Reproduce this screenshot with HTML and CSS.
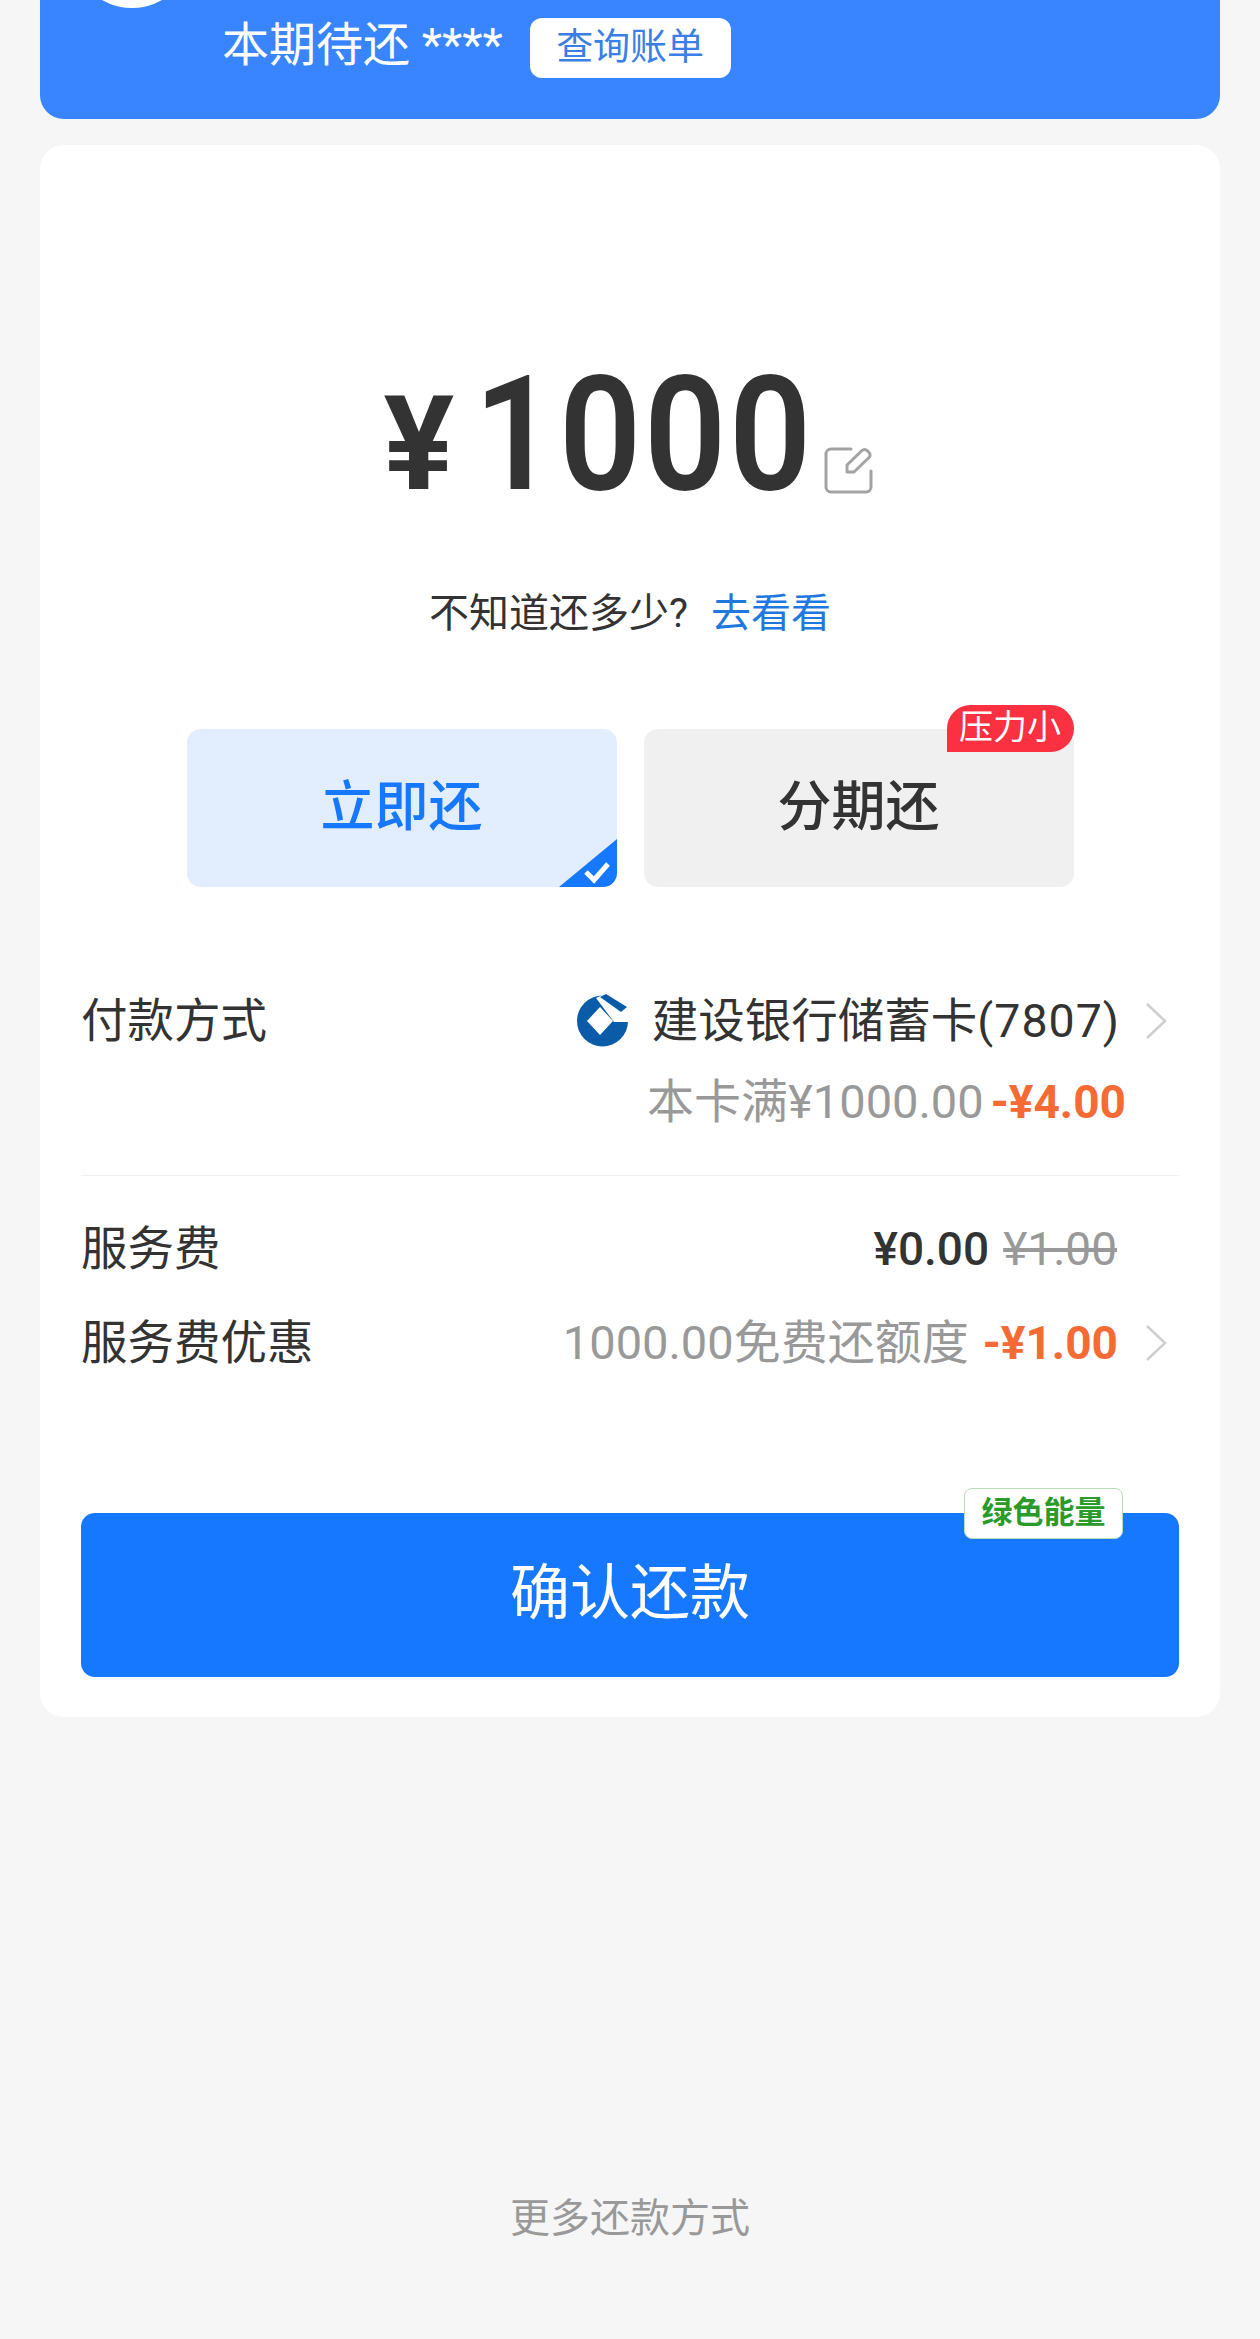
FILE: index.html
```html
<!DOCTYPE html>
<html lang="zh-CN">
<head>
<meta charset="utf-8">
<title>还款</title>
<link rel="stylesheet" href="styles.css">
</head>
<body>
<div class="page">
  <section class="banner">
    <div class="avatar"></div>
    <span class="due">本期待还 ****</span>
    <span class="bill-btn">查询账单</span>
  </section>

  <section class="card">
    <div class="amount">
      <span class="yen">¥</span>
      <span class="digits">1000</span>
      <svg class="edit" viewBox="0 0 49 47" width="49" height="47" fill="none" stroke="#a3a3a3" stroke-width="3" stroke-linecap="round" stroke-linejoin="round">
        <path d="M27 2H7a5 5 0 0 0-5 5v33a5 5 0 0 0 5 5h35a5 5 0 0 0 5-5V24"/>
        <path d="M23 25V18L38 3.500a3.500 3.500 0 0 1 5 0l2 2a3.500 3.500 0 0 1 0 5L30 25Z"/>
      </svg>
    </div>
    <p class="hint">不知道还多少?<a class="hint-link">去看看</a></p>

    <div class="options">
      <div class="option option-on">立即还
        <svg class="corner" viewBox="0 0 58 48" width="58" height="48">
          <path d="M58 0V48H0Z" fill="#1677ff"/>
          <path d="M27 33l8 8 14-16" fill="none" stroke="#fff" stroke-width="5"/>
        </svg>
      </div>
      <div class="option">分期还<span class="badge">压力小</span></div>
    </div>

    <div class="pay">
      <span class="label">付款方式</span>
      <div class="pay-right">
        <div class="pay-line">
          <svg class="bank" viewBox="0 0 51 54" width="51" height="54">
            <circle cx="25.500" cy="27" r="25.500" fill="#0b5ca8"/>
            <path d="M19 4L30 -1L56 14V28H37Z" fill="#fff"/>
            <path d="M23 3L29 0L50 13L44 18Z" fill="#0b5ca8"/>
            <path d="M23 13L36 27L23 41L10 27Z" fill="#fff"/>
          </svg>
          <span class="bank-name">建设银行储蓄卡<span class="bank-no">(7807)</span></span>
          <svg class="chev" viewBox="0 0 22 38" width="22" height="38"><path d="M2 2l18 17L2 36" fill="none" stroke="#cfcfcf" stroke-width="2.500"/></svg>
        </div>
        <div class="pay-sub"><span class="muted sub-amt">本卡满¥1000.00</span><b class="off">-¥4.00</b></div>
      </div>
    </div>

    <div class="fees">
      <div class="fee">
        <span class="label">服务费</span>
        <span class="fee-val fee-val-pad"><b class="free">¥0.00</b><s class="was">¥1.00</s></span>
      </div>
      <div class="fee fee-second">
        <span class="label">服务费优惠</span>
        <span class="fee-val"><span class="muted sub-amt">1000.00免费还额度</span><b class="off off-wide">-¥1.00</b>
          <svg class="chev chev-fee" viewBox="0 0 22 38" width="22" height="38"><path d="M2 2l18 17L2 36" fill="none" stroke="#cfcfcf" stroke-width="2.500"/></svg>
        </span>
      </div>
    </div>

    <div class="confirm">确认还款<span class="energy">绿色能量</span></div>
  </section>

  <div class="more">更多还款方式</div>
</div>
</body>
</html>
```

FILE: styles.css
```css
* { box-sizing: border-box; }
html, body { margin: 0; padding: 0; }
body {
  background: #f6f6f6;
  font-family: Roboto, "Noto Sans CJK SC", sans-serif;
  color: #333;
}
.page {
  height: 2339px;
  overflow: hidden;
  padding: 0 40px;
}
.banner {
  position: relative;
  height: 119px;
  padding: 15px 0 0 182px;
  display: flex;
  align-items: flex-start;
  background: #3885ff;
  border-radius: 0 0 24px 24px;
}
.avatar {
  position: absolute;
  left: 32px;
  top: -112px;
  width: 120px;
  height: 120px;
  border-radius: 50%;
  background: #fff;
}
.due {
  font-size: 47px;
  line-height: 60px;
  color: #fff;
}
.bill-btn {
  margin: 3px 0 0 27px;
  width: 201px;
  height: 60px;
  line-height: 60px;
  text-align: center;
  font-size: 37px;
  color: #3a7fe6;
  background: #fff;
  border-radius: 12px;
}
.card {
  margin-top: 26px;
  height: 1572px;
  padding: 0 41px;
  background: #fff;
  border-radius: 24px;
}
.amount {
  padding: 215px 3px 0 0;
  height: 360px;
  display: flex;
  justify-content: center;
  align-items: baseline;
}
.yen {
  font-size: 132px;
  line-height: 150px;
  font-weight: 700;
}
.digits {
  margin: 0 -37.600px 0 20px;
  font-size: 160px;
  line-height: 150px;
  font-weight: 600;
  letter-spacing: 3px;
  transform: scaleX(0.9);
  transform-origin: left center;
}
.edit {
  margin-left: 10px;
  align-self: flex-end;
  margin-bottom: 11px;
}
.hint {
  margin: 80px 0 0;
  text-align: center;
  font-size: 40px;
  line-height: 58px;
}
.hint-link {
  margin-left: 23px;
  color: #1f78e0;
}
.options {
  margin-top: 86px;
  display: flex;
  justify-content: center;
  gap: 27px;
}
.option {
  position: relative;
  width: 430px;
  height: 158px;
  line-height: 158px;
  text-align: center;
  font-size: 54px;
  font-weight: 500;
  background: #f0f0f0;
  border-radius: 14px;
}
.option-on {
  color: #1677ff;
  background: #e2eefe;
  overflow: hidden;
}
.corner {
  position: absolute;
  right: 0;
  bottom: 0;
  display: block;
}
.badge {
  position: absolute;
  right: 0;
  top: -24px;
  width: 127px;
  height: 47px;
  line-height: 45px;
  font-size: 34px;
  font-weight: 400;
  color: #fff;
  background: #fb3040;
  border-radius: 24px 24px 24px 0;
}
.pay {
  margin-top: 99px;
  padding-bottom: 38px;
  display: flex;
  justify-content: space-between;
  align-items: flex-start;
  border-bottom: 1px solid #f0f0f0;
}
.label {
  font-size: 46.500px;
  line-height: 70px;
}
.pay-right {
  display: flex;
  flex-direction: column;
  align-items: flex-end;
}
.pay-line {
  height: 70px;
  display: flex;
  align-items: center;
  padding-right: 12px;
}
.bank { margin-right: 24px; }
.bank-name {
  font-size: 46.500px;
  line-height: 70px;
}
.bank-no { letter-spacing: 1px; }
.chev { margin-left: 25px; }
.pay-sub {
  margin-top: 11px;
  padding-right: 53px;
  font-size: 46px;
  line-height: 70px;
  display: flex;
  align-items: baseline;
  gap: 7px;
}
.muted { color: #999; }
.sub-amt { font-size: 47px; }
.off {
  color: #f56a35;
  font-weight: 700;
}
.fees { margin-top: 38px; }
.fee {
  height: 70px;
  display: flex;
  justify-content: space-between;
  align-items: center;
}
.fee-second { margin-top: 24px; }
.fee-val {
  height: 70px;
  line-height: 70px;
  display: flex;
  align-items: baseline;
  font-size: 46px;
  padding-right: 12px;
}
.fee-val-pad { padding-right: 62px; }
.free { font-weight: 500; color: #333; }
.was { margin-left: 14px; color: #999; }
.off-wide { margin-left: 14px; }
.chev-fee { margin-left: 27px; align-self: center; }
.confirm {
  position: relative;
  margin-top: 135px;
  height: 164px;
  line-height: 162px;
  text-align: center;
  font-size: 60px;
  color: #fff;
  background: #1677ff;
  border-radius: 14px;
}
.energy {
  position: absolute;
  right: 56px;
  top: -25px;
  width: 159px;
  height: 51px;
  line-height: 48px;
  font-size: 31px;
  font-weight: 700;
  color: #2a9a2a;
  background: #fff;
  border: 1.500px solid #b8dcb8;
  border-radius: 8px;
}
.more {
  margin-top: 472px;
  text-align: center;
  font-size: 40px;
  line-height: 60px;
  color: #999;
}
```
